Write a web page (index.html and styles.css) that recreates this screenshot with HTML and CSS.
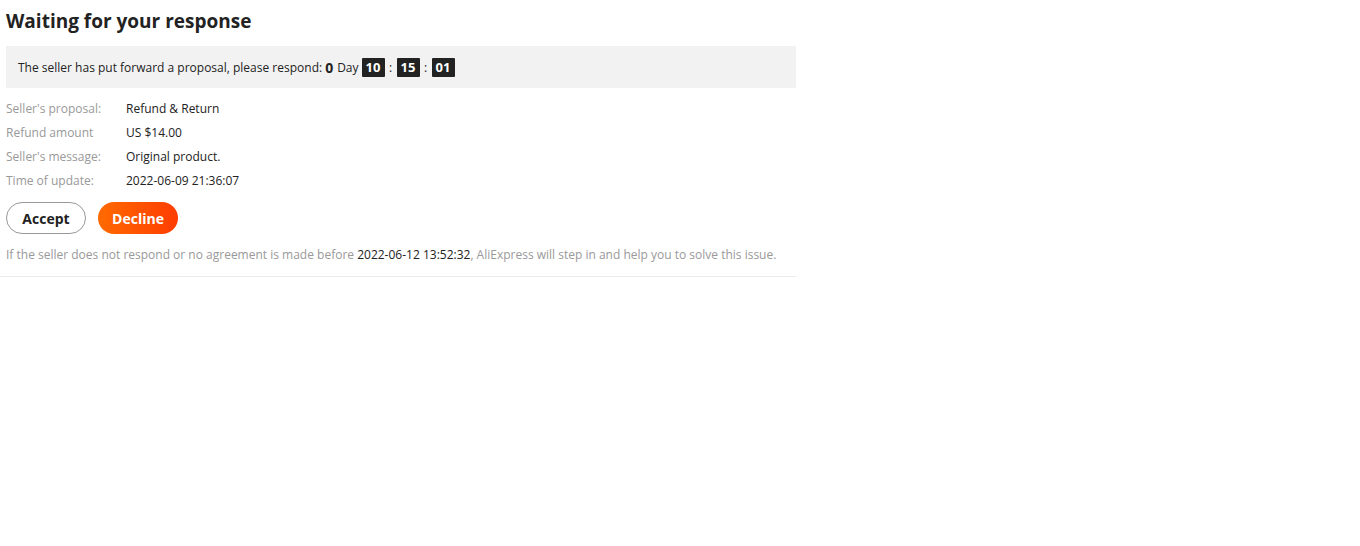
FILE: index.html
```html
<!DOCTYPE html>
<html>
<head>
<meta charset="utf-8">
<link rel="stylesheet" href="styles.css">
</head>
<body>
<div class="panel">
  <h1 class="title">Waiting for your response</h1>
  <div class="notice">
    <span>The seller has put forward a proposal, please respond:</span>
    <b class="days">0</b><span class="day">Day</span>
    <span class="tick">10</span><span class="sep">:</span><span class="tick">15</span><span class="sep">:</span><span class="tick">01</span>
  </div>
  <div class="info">
    <div class="row"><span class="label">Seller's proposal:</span><span class="value">Refund &amp; Return</span></div>
    <div class="row"><span class="label">Refund amount</span><span class="value">US $14.00</span></div>
    <div class="row"><span class="label">Seller's message:</span><span class="value">Original product.</span></div>
    <div class="row"><span class="label">Time of update:</span><span class="value">2022-06-09 21:36:07</span></div>
  </div>
  <div class="actions">
    <button class="btn accept">Accept</button>
    <button class="btn decline">Decline</button>
  </div>
  <p class="tip">If the seller does not respond or no agreement is made before <span class="dark">2022-06-12 13:52:32</span>, AliExpress will step in and help you to solve this issue.</p>
</div>
</body>
</html>
```
FILE: styles.css
```css
html, body {
  margin: 0;
  padding: 0;
  background: #fff;
}
body {
  font-family: "Open Sans", "Noto Sans", sans-serif;
  color: #222;
}
.panel {
  width: 796px;
  box-sizing: border-box;
  padding: 0 0 13px 6px;
  border-bottom: 1px solid #ebebeb;
}
.title {
  margin: 0;
  padding-top: 8px;
  font-size: 19px;
  line-height: 26px;
  font-weight: 700;
  color: #222;
}
.notice {
  margin-top: 12px;
  height: 42px;
  background: #f2f2f2;
  display: flex;
  align-items: center;
  padding-left: 12px;
  font-size: 12px;
  color: #222;
}
.days {
  font-size: 14px;
  font-weight: 700;
  margin-left: 3px;
}
.day {
  margin-left: 4px;
  margin-right: 3px;
}
.tick {
  display: inline-flex;
  align-items: center;
  justify-content: center;
  background: #222;
  color: #fff;
  font-weight: 700;
  font-size: 13px;
  height: 19px;
  padding: 0 3px;
  min-width: 17px;
  border-radius: 1px;
}
.sep {
  width: 12px;
  text-align: center;
}
.info {
  margin-top: 8px;
  display: flex;
  flex-direction: column;
}
.row {
  display: flex;
  height: 24px;
  align-items: center;
  font-size: 12px;
}
.label {
  width: 120px;
  color: #999;
}
.value {
  color: #222;
}
.actions {
  margin-top: 10px;
  display: flex;
  gap: 12px;
}
.btn {
  height: 32px;
  width: 80px;
  border-radius: 16px;
  font-family: "Open Sans", "Noto Sans", sans-serif;
  font-size: 14px;
  font-weight: 700;
  padding: 0;
  cursor: pointer;
}
.accept {
  background: #fff;
  border: 1px solid #999;
  color: #222;
}
.decline {
  border: none;
  color: #fff;
  background: linear-gradient(90deg, #ff6a00 0%, #fe3d02 100%);
}
.tip {
  margin: 13px 0 0 0;
  font-size: 12px;
  line-height: 16px;
  color: #999;
}
.dark {
  color: #222;
}
```
